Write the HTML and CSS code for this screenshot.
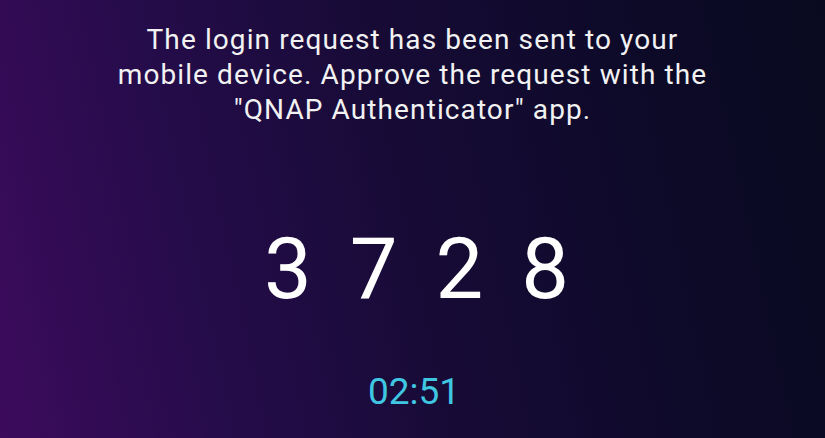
FILE: index.html
```html
<!DOCTYPE html>
<html>
<head>
<meta charset="utf-8">
<link rel="stylesheet" href="styles.css">
</head>
<body>
<main class="screen">
  <p class="message">The login request has been sent to your mobile device. Approve the request with the "QNAP Authenticator" app.</p>
  <div class="code"><span>3</span> <span>7</span> <span>2</span> <span>8</span></div>
  <div class="timer">02:51</div>
</main>
</body>
</html>
```

FILE: styles.css
```css
html, body {
  margin: 0;
  padding: 0;
  height: 100%;
}
body {
  background: linear-gradient(78deg, #3c0b5c 0%, #250c4a 25%, #170b36 50%, #0e0a2a 75%, #090a20 100%);
  font-family: Roboto, "Noto Sans", sans-serif;
  color: #ffffff;
  overflow: hidden;
}
.screen {
  display: flex;
  flex-direction: column;
  align-items: center;
  padding-top: 22px;
}
.message {
  margin: 0;
  width: 620px;
  text-align: center;
  font-size: 28px;
  line-height: 35px;
  letter-spacing: 1.1px;
  color: #f2f2f2;
}
.code {
  margin-top: 92px;
  padding-left: 8px;
  display: flex;
  gap: 38px;
  font-size: 85px;
  line-height: 100px;
  font-weight: 400;
  white-space: nowrap;
}
.code span {
  display: block;
}
.timer {
  margin-top: 51px;
  padding-left: 3px;
  font-size: 37px;
  line-height: 44px;
  color: #3fc7e2;
}
```
